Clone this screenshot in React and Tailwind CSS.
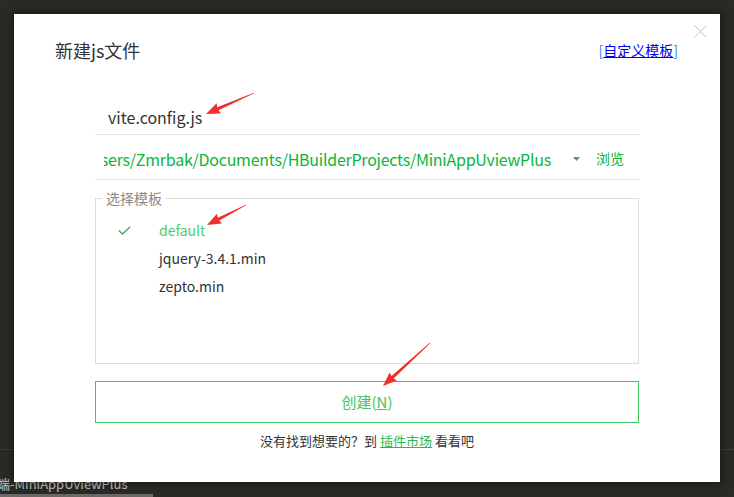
import React from 'react';

const FONT = "font-['Noto_Sans_CJK_SC','Noto_Sans',sans-serif]";

// red annotation arrow, tail -> tip
const Arrow = ({ from, to }) => {
  const [x1, y1] = from;
  const [x2, y2] = to;
  const dx = x2 - x1;
  const dy = y2 - y1;
  const len = Math.hypot(dx, dy);
  const ux = dx / len;
  const uy = dy / len;
  const nx = -uy;
  const ny = ux;
  const headLen = 13;
  const headW = 5.5;
  const bx = x2 - ux * headLen;
  const by = y2 - uy * headLen;
  const pts = [
    [x1 + nx * 0.4, y1 + ny * 0.4],
    [bx + nx * 1.6, by + ny * 1.6],
    [bx + nx * headW - ux * 1, by + ny * headW - uy * 1],
    [x2, y2],
    [bx - nx * headW - ux * 1, by - ny * headW - uy * 1],
    [bx - nx * 1.6, by - ny * 1.6],
    [x1 - nx * 0.4, y1 - ny * 0.4],
  ];
  return <polygon points={pts.map((p) => p.join(',')).join(' ')} fill="#f2302b" />;
};

const templates = [
  { name: 'default', active: true },
  { name: 'jquery-3.4.1.min' },
  { name: 'zepto.min' },
];

export default function App() {
  return (
    <div className={`relative w-[734px] h-[497px] overflow-hidden bg-[#2b2b26] ${FONT}`}>
      {/* editor behind the dialog */}
      <div className="flex flex-col h-full">
        <div className="h-[449px] shrink-0" />
        <div className="h-px bg-[#3d3d38]" />
        <div className="pt-[26px] text-[13px] leading-[16px] text-[#c8c8c8] whitespace-nowrap -ml-[3px]">
          端-MiniAppUviewPlus
        </div>
        <div className="mt-auto h-[3px] w-[153px] bg-[#6a6a66]" />
      </div>

      {/* dialog window */}
      <div className="absolute left-[14px] top-[14px] w-[706px] h-[468px] bg-white shadow-[0_0_10px_rgba(0,0,0,0.7)] flex flex-col">
        <button className="absolute right-[13px] top-[11px] w-[13px] h-[13px]">
          <svg viewBox="0 0 13 13" className="w-[13px] h-[13px]">
            <path d="M0.5 0.5 L12.5 12.5 M12.5 0.5 L0.5 12.5" stroke="#c4c4c4" strokeWidth="1" />
          </svg>
        </button>

        <div className="flex items-start justify-between pl-[41px] pr-[42px] pt-[24px]">
          <h1 className="text-[18px] leading-[24px] text-[#333]">新建js文件</h1>
          <a className="mt-[3px] text-[14px] leading-[18px] text-[#2a8ae6]">
            [<span className="text-[#0000ee] underline">自定义模板</span>]
          </a>
        </div>

        <div className="mx-[81px] mt-[38px] flex flex-col">
          <div className="h-[35px] border-b border-[#e2e2e2] flex items-center pl-[13px] text-[16px] text-[#333]">
            vite.config.js
          </div>

          <div className="h-[45px] border-b border-[#e2e2e2] flex items-center pl-[9px] pr-[15px] pt-[3px]">
            <div className="flex-1 min-w-0 overflow-hidden flex justify-end">
              <span className="whitespace-nowrap text-[16px] tracking-[-0.25px] text-[#0ab53c]">
                C:/Users/Zmrbak/Documents/HBuilderProjects/MiniAppUviewPlus
              </span>
            </div>
            <svg viewBox="0 0 7 4" className="w-[7px] h-[4px] ml-[22px] mr-[16px]">
              <path d="M0 0 H7 L3.5 4 Z" fill="#4f9c68" />
            </svg>
            <span className="text-[14px] text-[#0ab53c]">浏览</span>
          </div>

          <fieldset className="mt-[9px] h-[175px] border border-[#dcdcdc]">
            <legend className="ml-[6px] px-[4px] text-[14px] leading-[18px] text-[#8a8a8a]">选择模板</legend>
            <ul className="pt-[9px]">
              {templates.map((t) => (
                <li key={t.name} className="h-[28px] flex items-center text-[14px]">
                  <span className="w-[63px] pl-[22px] flex items-center">
                    {t.active && (
                      <svg viewBox="0 0 13 9" className="w-[13px] h-[9px]">
                        <path d="M0.8 4.5 L4.6 8 L12.2 0.8" fill="none" stroke="#3fae5c" strokeWidth="1.4" />
                      </svg>
                    )}
                  </span>
                  <span className={t.active ? 'text-[#4ccf62]' : 'text-[#333]'}>{t.name}</span>
                </li>
              ))}
            </ul>
          </fieldset>

          <button className="mt-[17px] h-[42px] border border-[#3cc85a] text-[15px] text-[#45c65c]">
            创建(<span className="underline">N</span>)
          </button>

          <p className="mt-[9px] text-center text-[13px] leading-[18px] text-[#333]">
            没有找到想要的？到 <a className="text-[#2fb84a] underline">插件市场</a> 看看吧
          </p>
        </div>
      </div>

      {/* annotation arrows */}
      <svg className="absolute inset-0 pointer-events-none" width="734" height="497">
        <Arrow from={[254, 93]} to={[206, 114]} />
        <Arrow from={[246, 205]} to={[207, 225]} />
        <Arrow from={[430, 343]} to={[383, 386]} />
      </svg>
    </div>
  );
}
